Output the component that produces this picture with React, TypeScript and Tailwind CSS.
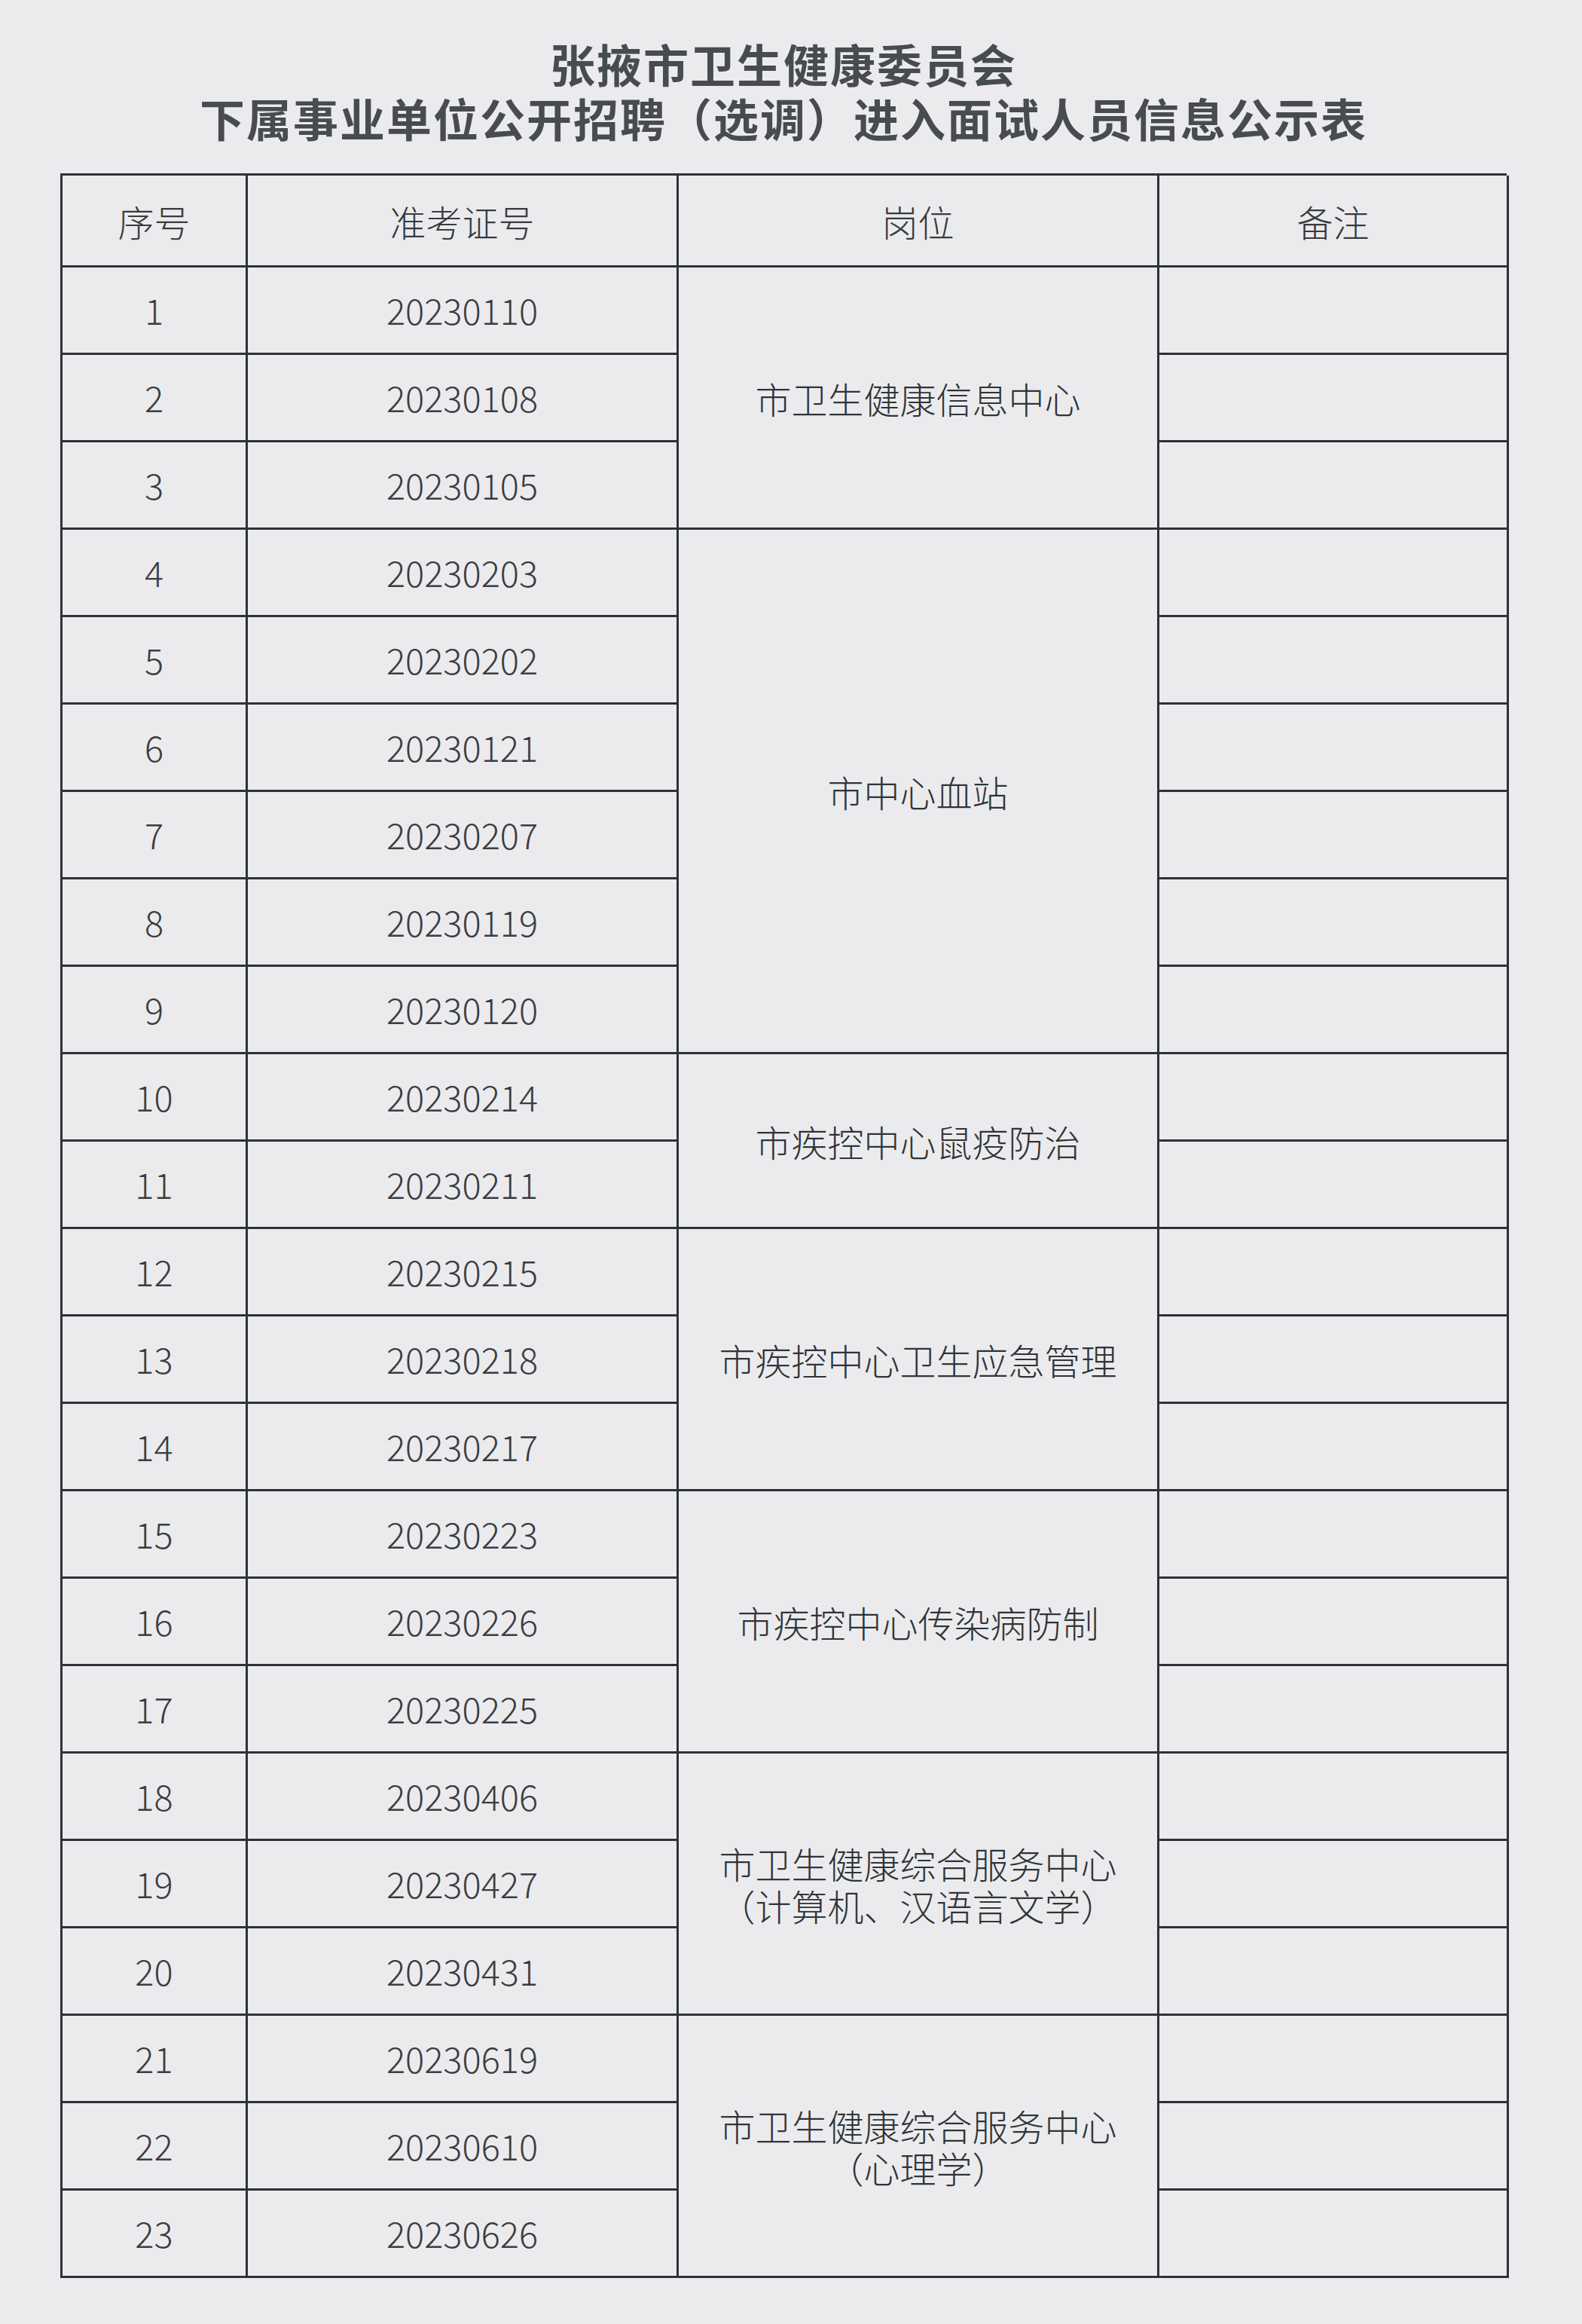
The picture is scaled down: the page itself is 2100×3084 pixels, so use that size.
import React from "react";

interface Group {
    post: string[];
    ids: string[];
}

const groups: Group[] = [
    { post: ["市卫生健康信息中心"], ids: ["20230110", "20230108", "20230105"] },
    {
        post: ["市中心血站"],
        ids: ["20230203", "20230202", "20230121", "20230207", "20230119", "20230120"],
    },
    { post: ["市疾控中心鼠疫防治"], ids: ["20230214", "20230211"] },
    { post: ["市疾控中心卫生应急管理"], ids: ["20230215", "20230218", "20230217"] },
    { post: ["市疾控中心传染病防制"], ids: ["20230223", "20230226", "20230225"] },
    {
        post: ["市卫生健康综合服务中心", "（计算机、汉语言文学）"],
        ids: ["20230406", "20230427", "20230431"],
    },
    { post: ["市卫生健康综合服务中心", "（心理学）"], ids: ["20230619", "20230610", "20230626"] },
];

const spanClass: Record<number, string> = {
    2: "row-span-2",
    3: "row-span-3",
    6: "row-span-6",
};

const cjk = "font-['Noto_Sans_CJK_SC','Noto_Sans',sans-serif]";
const cell = "border-r-[3px] border-b-[3px] border-[#2b3338] flex items-center justify-center";

export default function App() {
    let seq = 0;

    return (
        <div className="w-[2100px] h-[3084px] bg-[#ebebed] overflow-hidden">
            <div className="w-[1920px] ml-[80px] pt-[48px]">
                {/* Title */}
                <div
                    className={`${cjk} font-bold text-[60px] leading-[72px] text-[#474c51] text-center tracking-[2px]`}
                >
                    <p>张掖市卫生健康委员会</p>
                    <p>下属事业单位公开招聘（选调）进入面试人员信息公示表</p>
                </div>

                {/* Table */}
                <div className="mt-[38px] grid grid-cols-[246px_572px_638px_464px] grid-rows-[122px_repeat(23,116px)] border-l-[3px] border-t-[3px] border-[#2b3338]">
                    <div className={`${cell} ${cjk} font-light text-[48px] text-[#363b40]`}>序号</div>
                    <div className={`${cell} ${cjk} font-light text-[48px] text-[#363b40]`}>准考证号</div>
                    <div className={`${cell} ${cjk} font-light text-[48px] text-[#363b40]`}>岗位</div>
                    <div className={`${cell} ${cjk} font-light text-[48px] text-[#363b40]`}>备注</div>

                    {groups.map((g) =>
                        g.ids.map((id, i) => {
                            seq += 1;
                            return (
                                <React.Fragment key={id}>
                                    <div className={`${cell} ${cjk} font-light text-[47px] text-[#3a3d41]`}>{seq}</div>
                                    <div className={`${cell} ${cjk} font-light text-[47px] text-[#3a3d41]`}>{id}</div>
                                    {i === 0 && (
                                        <div
                                            className={`${cell} ${spanClass[g.ids.length]} flex-col ${cjk} font-light text-[48px] leading-[56px] text-[#2f3438]`}
                                        >
                                            {g.post.map((line) => (
                                                <p key={line}>{line}</p>
                                            ))}
                                        </div>
                                    )}
                                    <div className={cell} />
                                </React.Fragment>
                            );
                        })
                    )}
                </div>
            </div>
        </div>
    );
}
